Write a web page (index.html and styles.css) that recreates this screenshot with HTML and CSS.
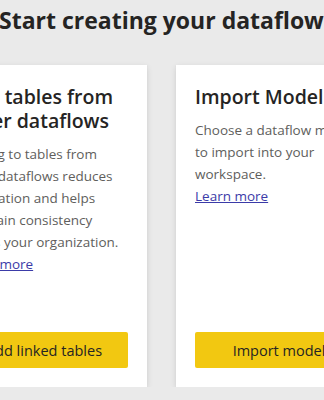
FILE: index.html
```html
<!DOCTYPE html>
<html lang="en">
<head>
    <meta charset="UTF-8">
    <meta name="viewport" content="width=device-width, initial-scale=1.0">
    <title>Dataflows</title>
    <link rel="stylesheet" href="styles.css">
</head>
<body>
    <div class="page">
        <h1 class="page-title">Start creating your dataflows</h1>

        <div class="card-row">
            <div class="card">
                <h2 class="card-title">Link tables from other dataflows</h2>
                <p class="card-text">
                    Linking to tables from other dataflows reduces duplication and helps maintain consistency across your organization.
                    <a href="#" class="learn-more">Learn more</a>
                </p>
                <button class="card-button">Add linked tables</button>
            </div>

            <div class="card">
                <h2 class="card-title">Import Model</h2>
                <p class="card-text">
                    Choose a dataflow model to import into your workspace.
                    <a href="#" class="learn-more">Learn more</a>
                </p>
                <button class="card-button">Import model</button>
            </div>
        </div>
    </div>
</body>
</html>
```

FILE: styles.css
```css
/* --- Base --- */
:root {
    --background-color: #eaeaea;
    --surface-color: #ffffff;
    --title-color: #252423;
    --text-color: #605e5c;
    --link-color: #3b3ba8;
    --accent-color: #f2c811;
}

body {
    margin: 0;
    font-family: 'Open Sans', 'Noto Sans', sans-serif;
    background-color: var(--background-color);
    color: var(--text-color);
    overflow: hidden;
}

.page {
    width: 600px;
    padding-top: 4px;
}

/* --- Heading --- */
.page-title {
    margin: 0 0 0 -1px;
    font-size: 23px;
    line-height: 32px;
    font-weight: 700;
    color: var(--title-color);
    white-space: nowrap;
}

/* --- Cards --- */
.card-row {
    display: flex;
    gap: 29px;
    margin-top: 29px;
    margin-left: -59px;
}

.card {
    width: 206px;
    height: 322px;
    box-sizing: border-box;
    padding: 20px 19px 19px;
    background-color: var(--surface-color);
    box-shadow: 0 2px 6px rgba(0, 0, 0, 0.12), 0 0.3px 1px rgba(0, 0, 0, 0.1);
    display: flex;
    flex-direction: column;
}

.card-title {
    margin: 0;
    font-size: 19.5px;
    line-height: 24px;
    font-weight: 600;
    color: var(--title-color);
}

.card-text {
    margin: 10px 0 0;
    font-size: 13.5px;
    line-height: 22px;
}

.learn-more {
    display: block;
    color: var(--link-color);
}

.card-button {
    margin-top: auto;
    height: 36px;
    border: none;
    border-radius: 2px;
    background-color: var(--accent-color);
    color: var(--title-color);
    font-family: inherit;
    font-size: 14.5px;
    cursor: pointer;
}
```
